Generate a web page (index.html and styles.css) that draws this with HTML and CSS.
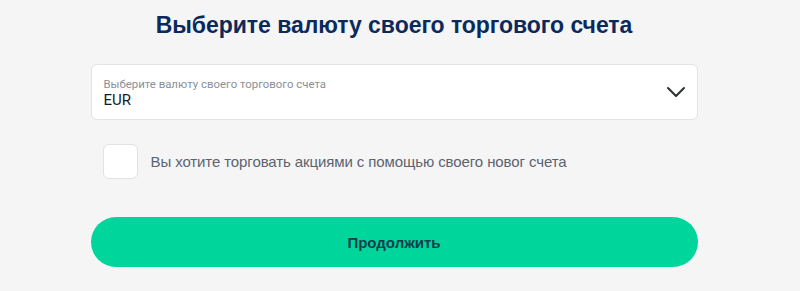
FILE: index.html
```html
<!DOCTYPE html>
<html lang="ru">
<head>
<meta charset="utf-8">
<title>Валюта счета</title>
<link rel="stylesheet" href="styles.css">
</head>
<body>
<div class="page">
  <div class="form">
    <h1 class="title">Выберите валюту своего торгового счета</h1>
    <div class="select">
      <div class="select-text">
        <span class="select-label">Выберите валюту своего торгового счета</span>
        <span class="select-value">EUR</span>
      </div>
      <svg class="chevron" width="20" height="12" viewBox="0 0 20 12" aria-hidden="true">
        <path d="M2 2 L10 10 L18 2" fill="none" stroke="#2b2f36" stroke-width="2" stroke-linecap="round" stroke-linejoin="round"/>
      </svg>
    </div>
    <label class="check-row">
      <span class="checkbox"></span>
      <span class="check-label">Вы хотите торговать акциями с помощью своего новог счета</span>
    </label>
    <button class="btn" type="button">Продолжить</button>
  </div>
</div>
</body>
</html>
```

FILE: styles.css
```css
* { box-sizing: border-box; }
html, body {
  margin: 0;
  padding: 0;
  background: #f5f5f5;
  font-family: "Liberation Sans", Arial, sans-serif;
}
.page {
  width: 788px;
  height: 291px;
}
.form {
  width: 607px;
  margin: 0 auto;
  padding-top: 10px;
  display: flex;
  flex-direction: column;
}
.title {
  margin: 0;
  text-align: center;
  font-size: 23px;
  line-height: 30px;
  font-weight: 700;
  color: #0b2a5b;
  letter-spacing: -0.05px;
}
.select {
  margin-top: 24px;
  height: 56px;
  background: #fff;
  border: 1px solid #e3e3e3;
  border-radius: 6px;
  display: flex;
  align-items: center;
  justify-content: space-between;
  padding: 0 11px 0 12px;
}
.select-text {
  display: flex;
  flex-direction: column;
  padding-top: 1px;
}
.select-label {
  font-family: Roboto, "Liberation Sans", sans-serif;
  font-size: 11.4px;
  line-height: 14px;
  color: #8a8f98;
}
.select-value {
  font-family: Roboto, "Liberation Sans", sans-serif;
  font-size: 15px;
  line-height: 18px;
  color: #0f1b2d;
}
.chevron { display: block; }
.check-row {
  margin-top: 24px;
  margin-left: 12px;
  display: flex;
  align-items: center;
  gap: 13px;
}
.checkbox {
  width: 35px;
  height: 35px;
  background: #fff;
  border: 1px solid #e2e2e2;
  border-radius: 6px;
  flex: none;
}
.check-label {
  font-size: 15px;
  color: #5c6370;
  letter-spacing: -0.1px;
}
.btn {
  margin-top: 38px;
  height: 50px;
  border: none;
  border-radius: 25px;
  background: #00d59b;
  color: #0c3d4d;
  font-family: "Liberation Sans", Arial, sans-serif;
  font-size: 15px;
  font-weight: 700;
  cursor: pointer;
}
```
